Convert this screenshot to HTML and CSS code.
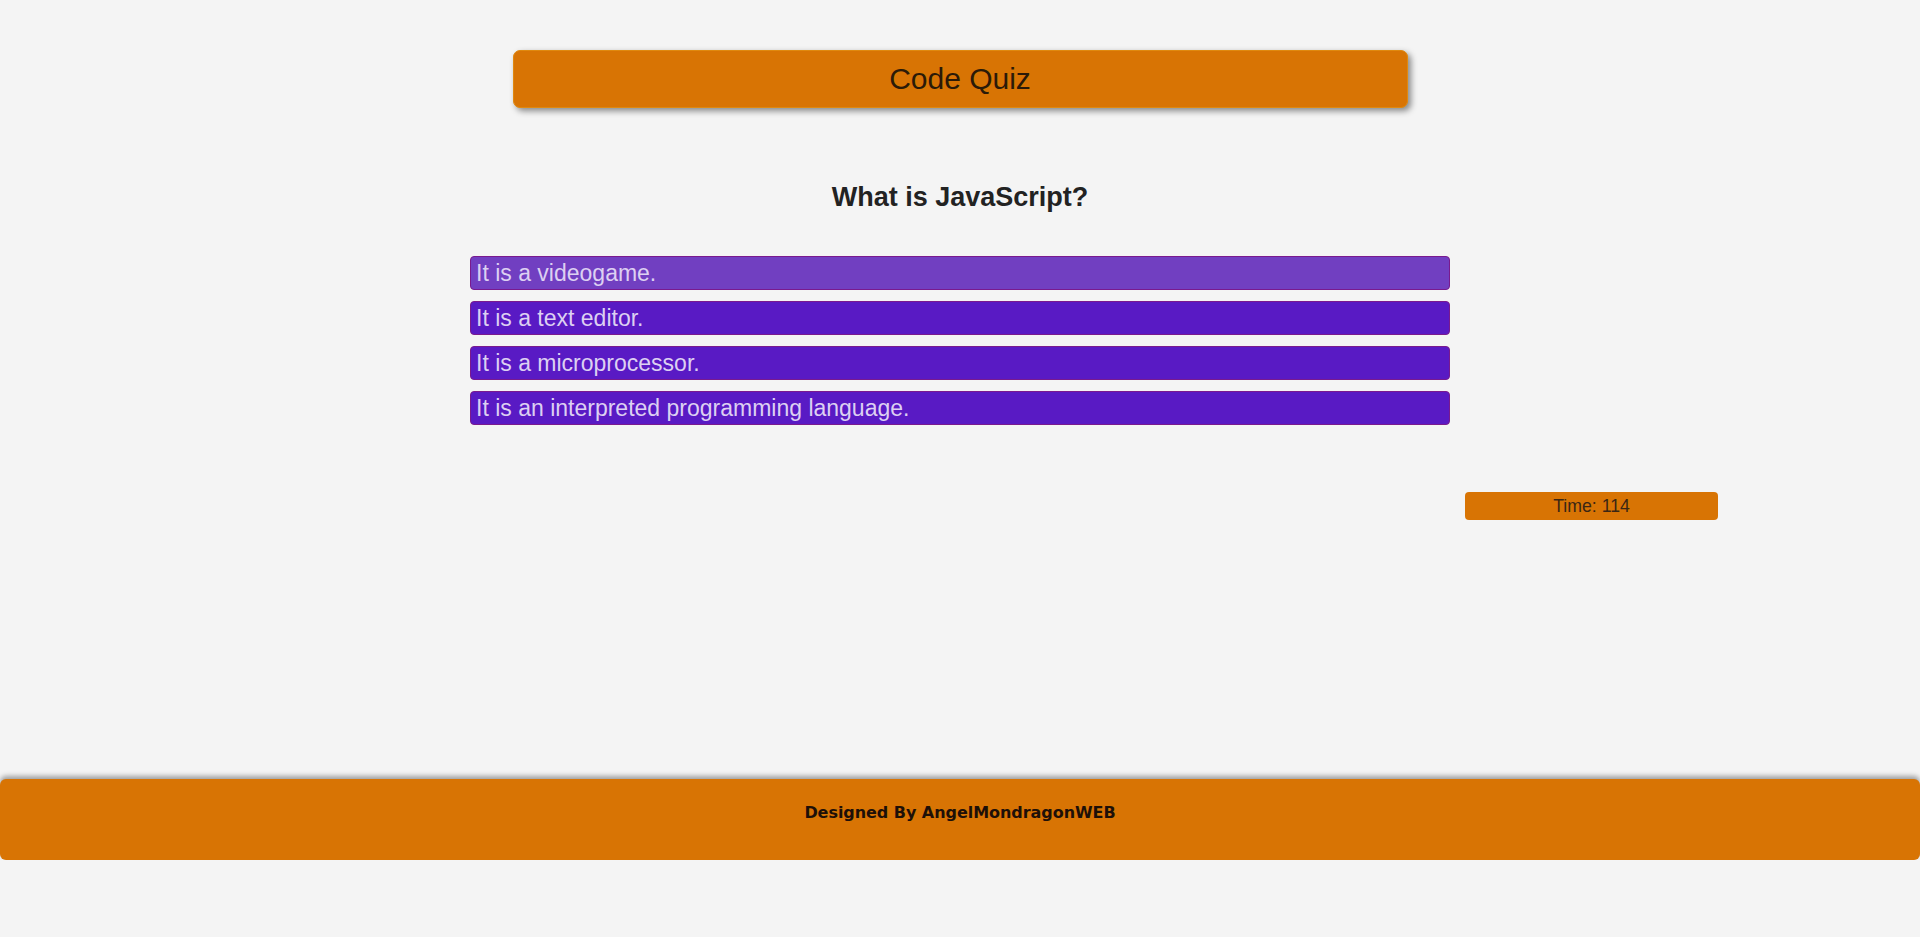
FILE: index.html
```html
<!DOCTYPE html>
<html lang="en">
<head>
<meta charset="utf-8">
<title>Code Quiz</title>
<link rel="stylesheet" href="styles.css">
</head>
<body>
<main class="page">
  <header class="title-bar">
    <h1 class="title">Code Quiz</h1>
  </header>
  <section class="quiz">
    <h2 class="question">What is JavaScript?</h2>
    <ul class="answers">
      <li class="answer answer-hover">It is a videogame.</li>
      <li class="answer">It is a text editor.</li>
      <li class="answer">It is a microprocessor.</li>
      <li class="answer">It is an interpreted programming language.</li>
    </ul>
  </section>
  <div class="timer-row">
    <div class="timer">Time: 114</div>
  </div>
</main>
<footer class="footer">
  <p class="credit">Designed By AngelMondragonWEB</p>
</footer>
</body>
</html>
```

FILE: styles.css
```css
html, body {
  margin: 0;
  padding: 0;
}

body {
  background: #f4f4f4;
  font-family: "Liberation Sans", Arial, sans-serif;
  color: #222;
}

.page {
  height: 779px;
  display: flex;
  flex-direction: column;
  align-items: center;
}

.title-bar {
  margin-top: 50px;
  width: 895px;
  height: 58px;
  box-sizing: border-box;
  background: #d87404;
  border: 1px solid #e0890f;
  border-radius: 7px;
  box-shadow: 3px 3px 6px rgba(0, 0, 0, 0.45);
  display: flex;
  align-items: center;
  justify-content: center;
}

.title {
  margin: 0;
  font-size: 30px;
  font-weight: normal;
  color: #2b1a08;
}

.quiz {
  width: 980px;
  display: flex;
  flex-direction: column;
  align-items: center;
}

.question {
  margin: 75px 0 0;
  font-size: 27px;
  line-height: 28px;
  font-weight: bold;
  color: #222;
}

.answers {
  list-style: none;
  margin: 45px 0 0;
  padding: 0;
  width: 980px;
  display: flex;
  flex-direction: column;
  gap: 11px;
}

.answer {
  height: 34px;
  box-sizing: border-box;
  background: #591ac4;
  border: 1px solid #7a1a8e;
  border-radius: 4px;
  color: #ddd0f2;
  font-size: 23px;
  line-height: 33px;
  padding: 0 5px;
}

.answer-hover {
  background: #713fc1;
}

.timer-row {
  width: 1920px;
  display: flex;
  margin-top: 67px;
}

.timer {
  margin-left: 1465px;
  width: 253px;
  height: 28px;
  box-sizing: border-box;
  background: #d87404;
  border-radius: 4px;
  color: #3a2614;
  font-size: 17.7px;
  line-height: 28px;
  text-align: center;
}

.footer {
  height: 81px;
  background: #d87404;
  border-radius: 6px;
  box-shadow: 0 -3px 5px rgba(0, 0, 0, 0.35);
  display: flex;
  justify-content: center;
  align-items: flex-start;
}

.credit {
  margin: 23px 0 0;
  font-family: "DejaVu Sans", sans-serif;
  font-weight: bold;
  font-size: 16px;
  line-height: 22px;
  letter-spacing: -0.05px;
  color: #1e1008;
}
```
